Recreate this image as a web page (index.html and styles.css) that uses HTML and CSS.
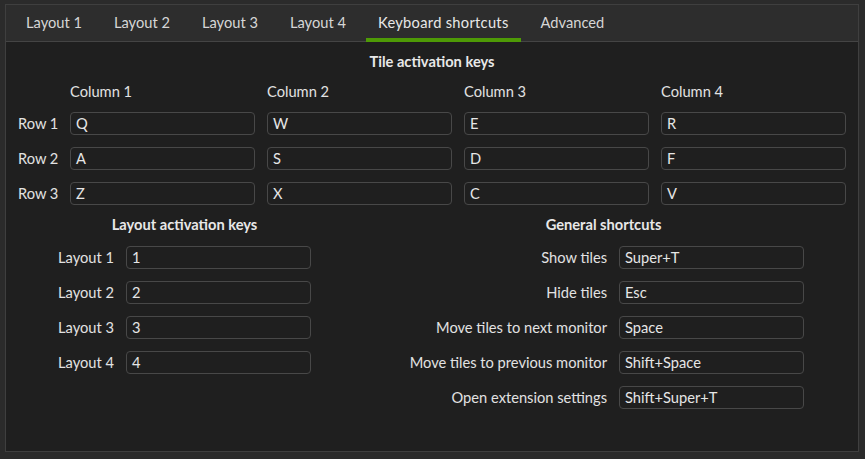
FILE: index.html
```html
<!DOCTYPE html>
<html>
<head>
<meta charset="utf-8">
<link rel="stylesheet" href="styles.css">
</head>
<body>
<div class="notebook">
  <div class="tabs">
    <div class="tab">Layout 1</div>
    <div class="tab">Layout 2</div>
    <div class="tab">Layout 3</div>
    <div class="tab">Layout 4</div>
    <div class="tab active">Keyboard shortcuts</div>
    <div class="tab">Advanced</div>
  </div>
  <div class="page">
    <div class="title">Tile activation keys</div>
    <div class="tile-heads">
      <span></span>
      <span class="col-head">Column 1</span>
      <span class="col-head">Column 2</span>
      <span class="col-head">Column 3</span>
      <span class="col-head">Column 4</span>
    </div>
    <div class="tile-grid">
      <span class="row-label">Row 1</span>
      <div class="entry">Q</div><div class="entry">W</div><div class="entry">E</div><div class="entry">R</div>
      <span class="row-label">Row 2</span>
      <div class="entry">A</div><div class="entry">S</div><div class="entry">D</div><div class="entry">F</div>
      <span class="row-label">Row 3</span>
      <div class="entry">Z</div><div class="entry">X</div><div class="entry">C</div><div class="entry">V</div>
    </div>
    <div class="lower">
      <div class="section">
        <div class="title small">Layout activation keys</div>
        <div class="form form-left">
          <span class="label">Layout 1</span><div class="entry">1</div>
          <span class="label">Layout 2</span><div class="entry">2</div>
          <span class="label">Layout 3</span><div class="entry">3</div>
          <span class="label">Layout 4</span><div class="entry">4</div>
        </div>
      </div>
      <div class="section">
        <div class="title small">General shortcuts</div>
        <div class="form form-right">
          <span class="label">Show tiles</span><div class="entry">Super+T</div>
          <span class="label">Hide tiles</span><div class="entry">Esc</div>
          <span class="label">Move tiles to next monitor</span><div class="entry">Space</div>
          <span class="label">Move tiles to previous monitor</span><div class="entry">Shift+Space</div>
          <span class="label">Open extension settings</span><div class="entry">Shift+Super+T</div>
        </div>
      </div>
    </div>
  </div>
</div>
</body>
</html>
```

FILE: styles.css
```css
html, body {
  margin: 0;
  padding: 0;
}
body {
  background: #2b2b2b;
  width: 865px;
  height: 459px;
  overflow: hidden;
  font-family: Lato, "Noto Sans", "DejaVu Sans", sans-serif;
  font-size: 14.67px;
  color: #e2e2e2;
}
.notebook {
  margin: 4px 0 0 5px;
  width: 852px;
  height: 446px;
  border: 1px solid #3f3f3f;
  display: flex;
  flex-direction: column;
}
.tabs {
  display: flex;
  flex: none;
  height: 36px;
  padding-left: 8px;
  gap: 8px;
  background: #2d2d2d;
  border-bottom: 1px solid #444444;
}
.tab {
  position: relative;
  padding: 0 12px;
  line-height: 35px;
  color: #d6d6d6;
  white-space: nowrap;
}
.tab.active {
  color: #e8e8e8;
  letter-spacing: 0.3px;
}
.tab.active::after {
  content: "";
  position: absolute;
  left: 0;
  right: 0;
  bottom: -1px;
  height: 4px;
  background: #4e9a06;
}
.page {
  flex: 1;
  background: #1f1f1f;
  padding: 10px 0 0 12px;
}
.title {
  font-weight: bold;
  text-align: center;
  line-height: 20px;
  color: #e8e8e8;
  padding-right: 12px;
}
.tile-heads,
.tile-grid {
  display: grid;
  grid-template-columns: 40px repeat(4, 185px);
  column-gap: 12px;
}
.tile-heads {
  margin-top: 10px;
  height: 20px;
  line-height: 20px;
  margin-bottom: 10px;
}
.tile-grid {
  grid-auto-rows: 23px;
  row-gap: 12px;
  align-items: center;
}
.row-label {
  white-space: nowrap;
}
.entry {
  box-sizing: border-box;
  height: 23px;
  border: 1px solid #484848;
  border-radius: 4px;
  padding: 0 5px;
  line-height: 21px;
  color: #e6e6e6;
  background: #1f1f1f;
  white-space: nowrap;
}
.lower {
  display: flex;
  justify-content: space-between;
  margin-top: 10px;
  padding: 0 54px 0 40px;
}
.section {
  display: flex;
  flex-direction: column;
}
.title.small {
  padding-right: 0;
  margin-bottom: 11px;
}
.form {
  display: grid;
  grid-auto-rows: 23px;
  row-gap: 12px;
  column-gap: 12px;
  align-items: center;
}
.form-left {
  grid-template-columns: 56px 185px;
}
.form-right {
  grid-template-columns: 204px 185px;
}
.label {
  text-align: right;
  white-space: nowrap;
}
```
